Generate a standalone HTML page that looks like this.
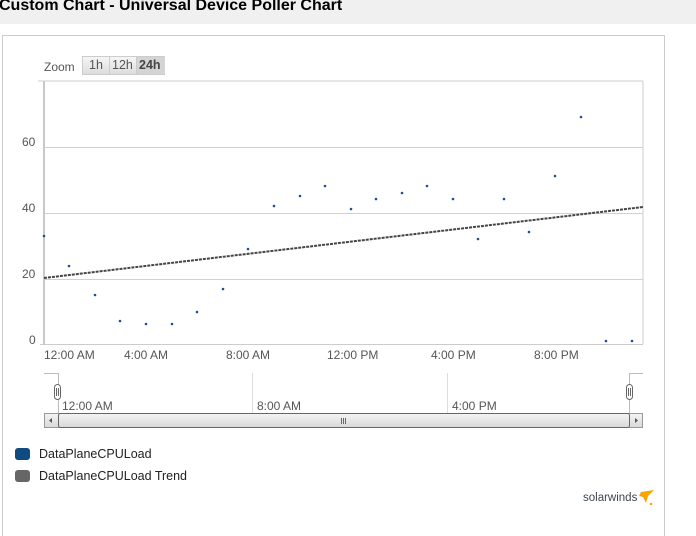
<!DOCTYPE html>
<html><head><style>
body{margin:0;width:696px;height:519px;background:#fff;font-family:"Liberation Sans",sans-serif;position:relative;overflow:hidden}
.hdr{position:absolute;left:0;top:0;width:696px;height:24px;background:#f0f0f0}
.hdr h1{margin:0;position:absolute;left:-1px;top:-3px;font-size:16px;font-weight:bold;color:#000}
.panel{position:absolute;left:2px;top:35px;width:661px;height:500px;border:1px solid #ccc;border-bottom:none}
.t{position:absolute;font-size:12px;color:#555;white-space:nowrap}
.leg{position:absolute;left:15px;width:15px;height:12px;border-radius:3px}
.lt{position:absolute;left:39px;font-size:12.5px;color:#222}
</style></head><body>
<div class="hdr"><h1>Custom Chart - Universal Device Poller Chart</h1></div>
<div class="panel"></div>
<div class="t" style="left:44px;top:60px;font-size:12px;color:#555">Zoom</div>
<div style="position:absolute;left:82px;top:56px;width:81px;height:17px;border:1px solid #ccc;background:linear-gradient(#f6f6f6,#ddd);font-size:12.5px;color:#555">
<span style="position:absolute;left:6px;top:1px">1h</span>
<span style="position:absolute;left:26px;top:0;width:1px;height:17px;background:#ccc"></span>
<span style="position:absolute;left:29px;top:1px">12h</span>
<span style="position:absolute;left:53px;top:0;width:28px;height:17px;background:#d4d4d4;border-left:1px solid #ccc"></span>
<span style="position:absolute;left:56px;top:1px;font-weight:bold;color:#444">24h</span>
</div>
<svg width="696" height="519" style="position:absolute;left:0;top:0">
<line x1="38" y1="81" x2="643" y2="81" stroke="#ccc"/>
<line x1="643" y1="81" x2="643" y2="344" stroke="#ccc"/>
<line x1="44" y1="147.5" x2="643" y2="147.5" stroke="#d0d0d0"/>
<line x1="44" y1="213.5" x2="643" y2="213.5" stroke="#d0d0d0"/>
<line x1="44" y1="279.5" x2="643" y2="279.5" stroke="#d0d0d0"/>
<line x1="40" y1="344.5" x2="643" y2="344.5" stroke="#ccc"/>
<line x1="44" y1="81" x2="44" y2="345" stroke="#c8c8c8" stroke-width="2"/>
<line x1="44" y1="278" x2="643" y2="207" stroke="#444" stroke-width="2" stroke-dasharray="3 1"/>
<g fill="#1d4f96">
<circle cx="44" cy="236" r="1.3"/><circle cx="69" cy="266" r="1.3"/><circle cx="95" cy="295" r="1.3"/><circle cx="120" cy="321" r="1.3"/><circle cx="146" cy="324" r="1.3"/><circle cx="172" cy="324" r="1.3"/><circle cx="197" cy="312" r="1.3"/><circle cx="223" cy="289" r="1.3"/><circle cx="248" cy="249" r="1.3"/><circle cx="274" cy="206" r="1.3"/><circle cx="300" cy="196" r="1.3"/><circle cx="325" cy="186" r="1.3"/><circle cx="351" cy="209" r="1.3"/><circle cx="376" cy="199" r="1.3"/><circle cx="402" cy="193" r="1.3"/><circle cx="427" cy="186" r="1.3"/><circle cx="453" cy="199" r="1.3"/><circle cx="478" cy="239" r="1.3"/><circle cx="504" cy="199" r="1.3"/><circle cx="529" cy="232" r="1.3"/><circle cx="555" cy="176" r="1.3"/><circle cx="581" cy="117" r="1.3"/><circle cx="606" cy="341" r="1.3"/><circle cx="632" cy="341" r="1.3"/>
</g>
<polyline points="44,373.5 58.5,373.5 58.5,413" fill="none" stroke="#bbb"/>
<polyline points="629.5,413 629.5,373.5 643,373.5" fill="none" stroke="#bbb"/>
<line x1="252.5" y1="373" x2="252.5" y2="413" stroke="#ddd"/>
<line x1="447.5" y1="373" x2="447.5" y2="413" stroke="#ddd"/>
<rect x="54.5" y="384.5" width="6" height="15" rx="3" fill="#fff" stroke="#666"/>
<line x1="56.5" y1="388" x2="56.5" y2="396" stroke="#666"/><line x1="58.5" y1="388" x2="58.5" y2="396" stroke="#666"/>
<rect x="626.5" y="384.5" width="6" height="15" rx="3" fill="#fff" stroke="#666"/>
<line x1="628.5" y1="388" x2="628.5" y2="396" stroke="#666"/><line x1="630.5" y1="388" x2="630.5" y2="396" stroke="#666"/>
<defs><linearGradient id="g" x1="0" y1="0" x2="0" y2="1"><stop offset="0" stop-color="#f4f4f4"/><stop offset="1" stop-color="#d8d8d8"/></linearGradient></defs>
<rect x="44.5" y="413.5" width="598" height="14" fill="url(#g)" stroke="#999"/>
<rect x="58.5" y="413.5" width="571" height="14" rx="2" fill="url(#g)" stroke="#666"/>
<path d="M52,418 L49,420.5 L52,423Z" fill="#555"/>
<path d="M635,418 L638,420.5 L635,423Z" fill="#555"/>
<g stroke="#666"><line x1="341.5" y1="418" x2="341.5" y2="424"/><line x1="343.5" y1="418" x2="343.5" y2="424"/><line x1="345.5" y1="418" x2="345.5" y2="424"/></g>
<path d="M641,492 L654,490 L648,496 L646,503 L643,497 L639,496Z" fill="#f7a300"/>
<circle cx="651" cy="504" r="1.2" fill="#f7a300"/>
</svg>
<div class="t" style="left:22px;top:135px">60</div>
<div class="t" style="left:22px;top:201px">40</div>
<div class="t" style="left:22px;top:267px">20</div>
<div class="t" style="left:29px;top:333px">0</div>
<div class="t" style="left:44px;top:348px">12:00 AM</div>
<div class="t" style="left:124px;top:348px">4:00 AM</div>
<div class="t" style="left:226px;top:348px">8:00 AM</div>
<div class="t" style="left:327px;top:348px">12:00 PM</div>
<div class="t" style="left:431px;top:348px">4:00 PM</div>
<div class="t" style="left:534px;top:348px">8:00 PM</div>
<div class="t" style="left:62px;top:399px">12:00 AM</div>
<div class="t" style="left:257px;top:399px">8:00 AM</div>
<div class="t" style="left:452px;top:399px">4:00 PM</div>
<div class="leg" style="top:448px;background:#0f4a80"></div>
<div class="lt" style="top:447px">DataPlaneCPULoad</div>
<div class="leg" style="top:470px;background:#666"></div>
<div class="lt" style="top:469px">DataPlaneCPULoad Trend</div>
<div style="position:absolute;left:583px;top:492px;font-size:11.5px;color:#3c4650">solarwinds</div>
</body></html>
